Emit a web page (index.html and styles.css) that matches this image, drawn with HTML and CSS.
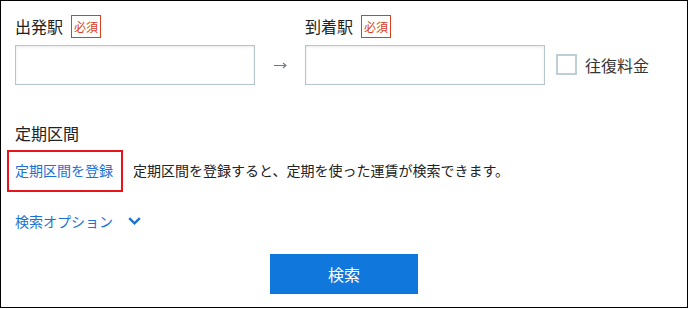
FILE: index.html
```html
<!DOCTYPE html>
<html lang="ja">
<head>
<meta charset="utf-8">
<title>経路検索</title>
<link rel="stylesheet" href="styles.css">
</head>
<body>
<div class="panel">
  <div class="stations">
    <div class="label-row c1"><span class="label">出発駅</span><span class="badge">必須</span></div>
    <div class="label-row c3"><span class="label">到着駅</span><span class="badge">必須</span></div>
    <input class="field c1" type="text">
    <div class="arrow c2">
      <svg width="13" height="7" viewBox="0 0 13 7"><path d="M0 3.5H12M9 1L12 3.5L9 6" fill="none" stroke="#6f7d83" stroke-width="1.1"/></svg>
    </div>
    <input class="field c3" type="text">
    <label class="round c4"><span class="check"></span><span class="round-text">往復料金</span></label>
  </div>

  <div class="section-title">定期区間</div>
  <div class="pass-row">
    <span class="highlight"><a class="link" href="#">定期区間を登録</a></span>
    <span class="desc">定期区間を登録すると、定期を使った運賃が検索できます。</span>
  </div>

  <div class="options">
    <a class="link" href="#">検索オプション</a>
    <svg class="chev" width="13" height="8" viewBox="0 0 13 8"><path d="M1.2 1.2L6.5 6.3L11.8 1.2" fill="none" stroke="#1a73d4" stroke-width="2.4"/></svg>
  </div>

  <div class="actions">
    <button class="search-btn" type="button">検索</button>
  </div>
</div>
</body>
</html>
```

FILE: styles.css
```css
* { box-sizing: border-box; }
html, body { margin: 0; padding: 0; background: #fff; }
body {
  font-family: "Noto Sans CJK JP", "Noto Sans", sans-serif;
  color: #222;
}
.panel {
  width: 688px;
  height: 308px;
  border: 1px solid #000;
  padding: 12px 14px 14px 14px;
}
.stations {
  display: grid;
  grid-template-columns: 240px 50px 240px auto;
  grid-template-rows: 25px 40px;
  row-gap: 7px;
}
.c1 { grid-column: 1; }
.c2 { grid-column: 2; }
.c3 { grid-column: 3; }
.c4 { grid-column: 4; }
.label-row {
  grid-row: 1;
  display: flex;
  align-items: center;
}
.label {
  font-size: 16px;
  line-height: 24px;
  color: #222;
}
.badge {
  margin-left: 8px;
  align-self: flex-end;
  border: 1px solid #d8401f;
  color: #d8401f;
  font-size: 12px;
  line-height: 21px;
  padding: 0 2px;
}
.field {
  grid-row: 2;
  width: 240px;
  height: 40px;
  margin: 0;
  border: 1px solid #b6c5cc;
  background: #fff;
  box-shadow: inset 0 1px 3px rgba(0, 0, 0, 0.09);
  outline: none;
}
.arrow {
  grid-row: 2;
  display: flex;
  align-items: center;
  justify-content: center;
  padding-left: 1px;
}
.arrow svg { display: block; }
.round {
  grid-row: 2;
  display: flex;
  align-items: center;
  margin-left: 11px;
  padding-bottom: 1px;
}
.check {
  width: 21px;
  height: 21px;
  border: 2px solid #c0ced5;
  background: #fff;
}
.round-text {
  margin-left: 8px;
  font-size: 16px;
  line-height: 24px;
  color: #333;
}
.section-title {
  margin-top: 36px;
  font-size: 16px;
  line-height: 24px;
  color: #222;
}
.pass-row {
  margin-top: 5px;
  display: flex;
  align-items: center;
}
.highlight {
  margin-left: -8px;
  border: 2px solid #e8141c;
  padding: 7px 8px 10px 6px;
  line-height: 20px;
}
.link {
  color: #1a73d4;
  text-decoration: none;
  font-size: 14px;
  line-height: 20px;
}
.desc {
  margin-left: 10px;
  font-size: 14px;
  line-height: 20px;
  color: #222;
  padding-bottom: 3px;
}
.options {
  margin-top: 19px;
  display: flex;
  align-items: center;
  height: 20px;
}
.chev {
  display: block;
  margin-left: 15px;
}
.actions {
  margin-top: 23px;
  display: flex;
  justify-content: center;
}
.search-btn {
  width: 148px;
  height: 40px;
  border: none;
  margin: 0;
  background: #1077dc;
  color: #fff;
  font-family: "Noto Sans CJK JP", sans-serif;
  font-size: 16px;
  padding: 0;
}
```
